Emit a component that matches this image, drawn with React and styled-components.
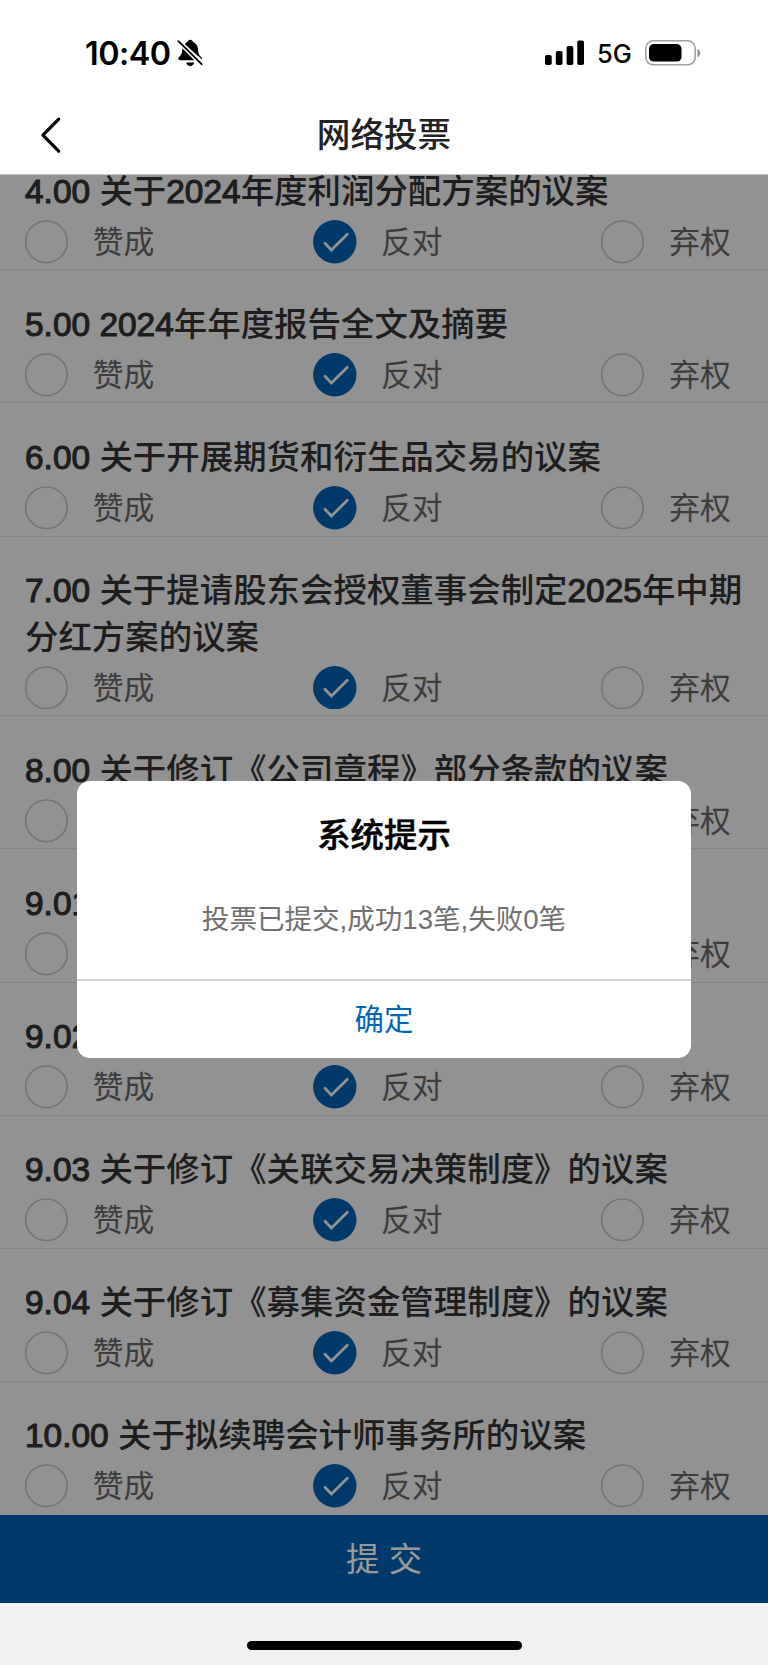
import React from "react";
import styled, { createGlobalStyle } from "styled-components";

const GlobalStyle = createGlobalStyle`
  * { box-sizing: border-box; }
  body {
    margin: 0;
    background: #f1f1f1;
    font-family: "Liberation Sans", "Noto Sans CJK SC", sans-serif;
  }
`;

const Screen = styled.div`
  width: 768px;
  height: 1665px;
  display: flex;
  flex-direction: column;
  overflow: hidden;
`;

const StatusBar = styled.header`
  height: 100px;
  padding: 5px 67px 0 85px;
  display: flex;
  align-items: center;
  background: #fff;
  color: #000;
  font-family: Inter, sans-serif;
  flex: none;
`;

const Clock = styled.span`
  width: 92px;
  padding-top: 1px;
  font-size: 32.3px;
  font-weight: 580;
  letter-spacing: -0.5px;
  white-space: nowrap;
`;

const StatusIcons = styled.div`
  margin-left: auto;
  display: flex;
  align-items: center;
`;

const Network = styled.span`
  width: 61px;
  padding: 2px 0 0 13px;
  font-size: 25.5px;
  line-height: 30px;
  font-weight: 500;
`;

const NavBar = styled.nav`
  height: 75px;
  padding: 0 40px;
  display: grid;
  grid-template-columns: 24px 1fr 24px;
  align-items: center;
  background: #fff;
  border-bottom: 1px solid #c6c6c6;
  flex: none;
`;

const NavTitle = styled.h1`
  margin: 0;
  padding-bottom: 3px;
  text-align: center;
  font-size: 33.6px;
  line-height: 48px;
  font-weight: 500;
  color: #222;
`;

const BackButton = styled.button`
  height: 44px;
  padding: 0 0 4px;
  border: 0;
  background: none;
  svg { display: block; }
`;

const Content = styled.main`
  position: relative;
  height: 1428px;
  flex: none;
  display: flex;
  flex-direction: column;
  overflow: hidden;
  background: #f3f3f6;
`;

const List = styled.div`
  height: 1340px;
  padding-bottom: 1.2px;
  display: flex;
  flex-direction: column;
  justify-content: flex-end;
  overflow: hidden;
  flex: none;
`;

const Proposal = styled.section`
  flex: none;
  padding: 31.7px 20px 5.9px 25px;
  border-bottom: ${(p) => (p.$last ? "0" : "1px solid #e0e0e1")};
`;

const ProposalTitle = styled.h2`
  margin: 0;
  font-size: 33.45px;
  line-height: 46.7px;
  font-weight: 500;
  color: #333;
`;

const Latin = styled.span`
  -webkit-text-stroke: 1.1px #333;
`;

const Options = styled.div`
  display: grid;
  grid-template-columns: 288.2px 288.2px 1fr;
  padding-top: 4.3px;
`;

const Option = styled.label`
  display: flex;
  align-items: center;
  height: 43.5px;
  color: #666;
`;

const OptionText = styled.span`
  padding: 2px 0 0 24.3px;
  font-size: 30.8px;
  line-height: 41.5px;
  white-space: nowrap;
`;

const Radio = styled.span`
  width: 43.5px;
  height: 43.5px;
  flex: none;
  svg { display: block; }
`;

const SubmitButton = styled.button`
  height: 88px;
  flex: none;
  padding: 0 0 5px;
  border: 0;
  background: #0061b2;
  color: #fff;
  font-family: inherit;
  font-size: 33.4px;
`;

const Overlay = styled.div`
  position: absolute;
  inset: 0;
  display: flex;
  justify-content: center;
  align-items: flex-start;
  padding-top: 606px;
  background: rgba(0, 0, 0, 0.4);
`;

const Dialog = styled.div`
  width: 614px;
  height: 277px;
  display: flex;
  flex-direction: column;
  border-radius: 13px;
  background: #fff;
  text-align: center;
  overflow: hidden;
`;

const DialogTitle = styled.h3`
  margin: 0;
  padding-top: 31px;
  font-size: 33.4px;
  line-height: 48px;
  font-weight: 500;
  color: #000;
  -webkit-text-stroke: 0.5px #000;
`;

const DialogMessage = styled.p`
  margin: 0;
  padding-top: 40px;
  flex: 1;
  font-size: 27.55px;
  line-height: 40px;
  color: #707070;
`;

const ConfirmButton = styled.button`
  height: 79.5px;
  padding: 0 0 4px;
  border: 0;
  border-top: 2px solid #d0d0d0;
  background: none;
  color: #0066b8;
  font-family: inherit;
  font-size: 29.4px;
`;

const HomeArea = styled.footer`
  flex: 1;
  display: flex;
  justify-content: center;
  align-items: flex-start;
  padding-top: 38px;
  background: #f1f1f1;
`;

const HomeIndicator = styled.div`
  width: 275px;
  height: 9px;
  border-radius: 5px;
  background: #000;
`;

const BellOff = () => (
  <svg width="26" height="28" viewBox="0 0 26 28">
    <path d="M6.2 7.2 20.5 21.2H3.3C1.2 21.2.7 19.2 2 18c2.300-2.200 3-3.300 3.200-6.200C5.300 9.900 5.500 8.400 6.200 7.200Z" />
    <path d="M7.700 5.200C8.600 4.100 9.400 3.500 10.300 3.100 10.600 1.600 11.700.7 13.200.7s2.600.9 2.900 2.400c3.200 1.300 4.800 4.200 5 8.100.2 3.500.9 4.800 3.100 6.800.8.800.9 1.700.5 2.300Z" />
    <path d="M9.200 23.500h8c-.4 2.100-2 3.400-4 3.400s-3.600-1.300-4-3.400Z" />
    <path d="M1.200 2 24.800 25.400" stroke="#fff" strokeWidth="4.600" />
    <path d="M1.400 2.200 24.600 25.200" stroke="#000" strokeWidth="1.900" strokeLinecap="round" />
  </svg>
);

const Signal = () => (
  <svg width="39" height="26" viewBox="0 0 39 26">
    <rect x="0" y="15" width="6.700" height="10" rx="1.700" />
    <rect x="10.800" y="11" width="6.700" height="14" rx="1.700" />
    <rect x="21.600" y="6" width="6.700" height="19" rx="1.700" />
    <rect x="32.300" y=".5" width="6.700" height="24.500" rx="1.700" />
  </svg>
);

const Battery = () => (
  <svg width="56" height="26" viewBox="0 0 56 26">
    <rect x=".8" y=".8" width="49.400" height="24" rx="7.500" fill="none" stroke="#a0a0a0" strokeWidth="1.600" />
    <rect x="4" y="4" width="32.500" height="17.600" rx="4.700" />
    <path d="M52.500 8.700c3.400 1.400 3.400 7.200 0 8.600Z" fill="#8c8c8c" />
  </svg>
);

const RadioMark = ({ checked }) => (
  <svg width="43.500" height="43.500" viewBox="0 0 43.500 43.500">
    {checked ? (
      <>
        <circle cx="21.800" cy="21.750" r="21.700" fill="#0061b2" />
        <path d="M12 23.300 18.400 30 34.300 14.300" fill="none" stroke="#f4f4f4" strokeWidth="2.800" strokeLinecap="round" />
      </>
    ) : (
      <circle cx="21.400" cy="21.750" r="20.800" fill="none" stroke="#c2c2c2" strokeWidth="1.600" />
    )}
  </svg>
);

const proposals = [
  "4.00 关于2024年度利润分配方案的议案",
  "5.00 2024年年度报告全文及摘要",
  "6.00 关于开展期货和衍生品交易的议案",
  "7.00 关于提请股东会授权董事会制定2025年中期分红方案的议案",
  "8.00 关于修订《公司章程》部分条款的议案",
  "9.01",
  "9.02",
  "9.03 关于修订《关联交易决策制度》的议案",
  "9.04 关于修订《募集资金管理制度》的议案",
  "10.00 关于拟续聘会计师事务所的议案",
];

const choices = ["赞成", "反对", "弃权"];

// Digits carry a slightly heavier stroke than the Chinese text around them.
const renderTitle = (title) =>
  title
    .split(/([\d.]+)/)
    .map((part, i) => (i % 2 ? <Latin key={i}>{part}</Latin> : part));

export default function App() {
  return (
    <>
      <GlobalStyle />
      <Screen>
        <StatusBar>
          <Clock>10:40</Clock>
          <BellOff />
          <StatusIcons>
            <Signal />
            <Network>5G</Network>
            <Battery />
          </StatusIcons>
        </StatusBar>
        <NavBar>
          <BackButton aria-label="返回">
            <svg width="24" height="40" viewBox="0 0 24 40">
              <path d="M18.700 4.200 2.900 20.200 18.700 36.200" fill="none" stroke="#000" strokeWidth="3.200" strokeLinecap="round" strokeLinejoin="round" />
            </svg>
          </BackButton>
          <NavTitle>网络投票</NavTitle>
        </NavBar>
        <Content>
          <List>
            {proposals.map((title, i) => (
              <Proposal key={title} $last={i === proposals.length - 1}>
                <ProposalTitle>{renderTitle(title)}</ProposalTitle>
                <Options>
                  {choices.map((choice) => (
                    <Option key={choice}>
                      <Radio>
                        <RadioMark checked={choice === "反对"} />
                      </Radio>
                      <OptionText>{choice}</OptionText>
                    </Option>
                  ))}
                </Options>
              </Proposal>
            ))}
          </List>
          <SubmitButton>提 交</SubmitButton>
          <Overlay>
            <Dialog role="dialog">
              <DialogTitle>系统提示</DialogTitle>
              <DialogMessage>投票已提交,成功13笔,失败0笔</DialogMessage>
              <ConfirmButton>确定</ConfirmButton>
            </Dialog>
          </Overlay>
        </Content>
        <HomeArea>
          <HomeIndicator />
        </HomeArea>
      </Screen>
    </>
  );
}
